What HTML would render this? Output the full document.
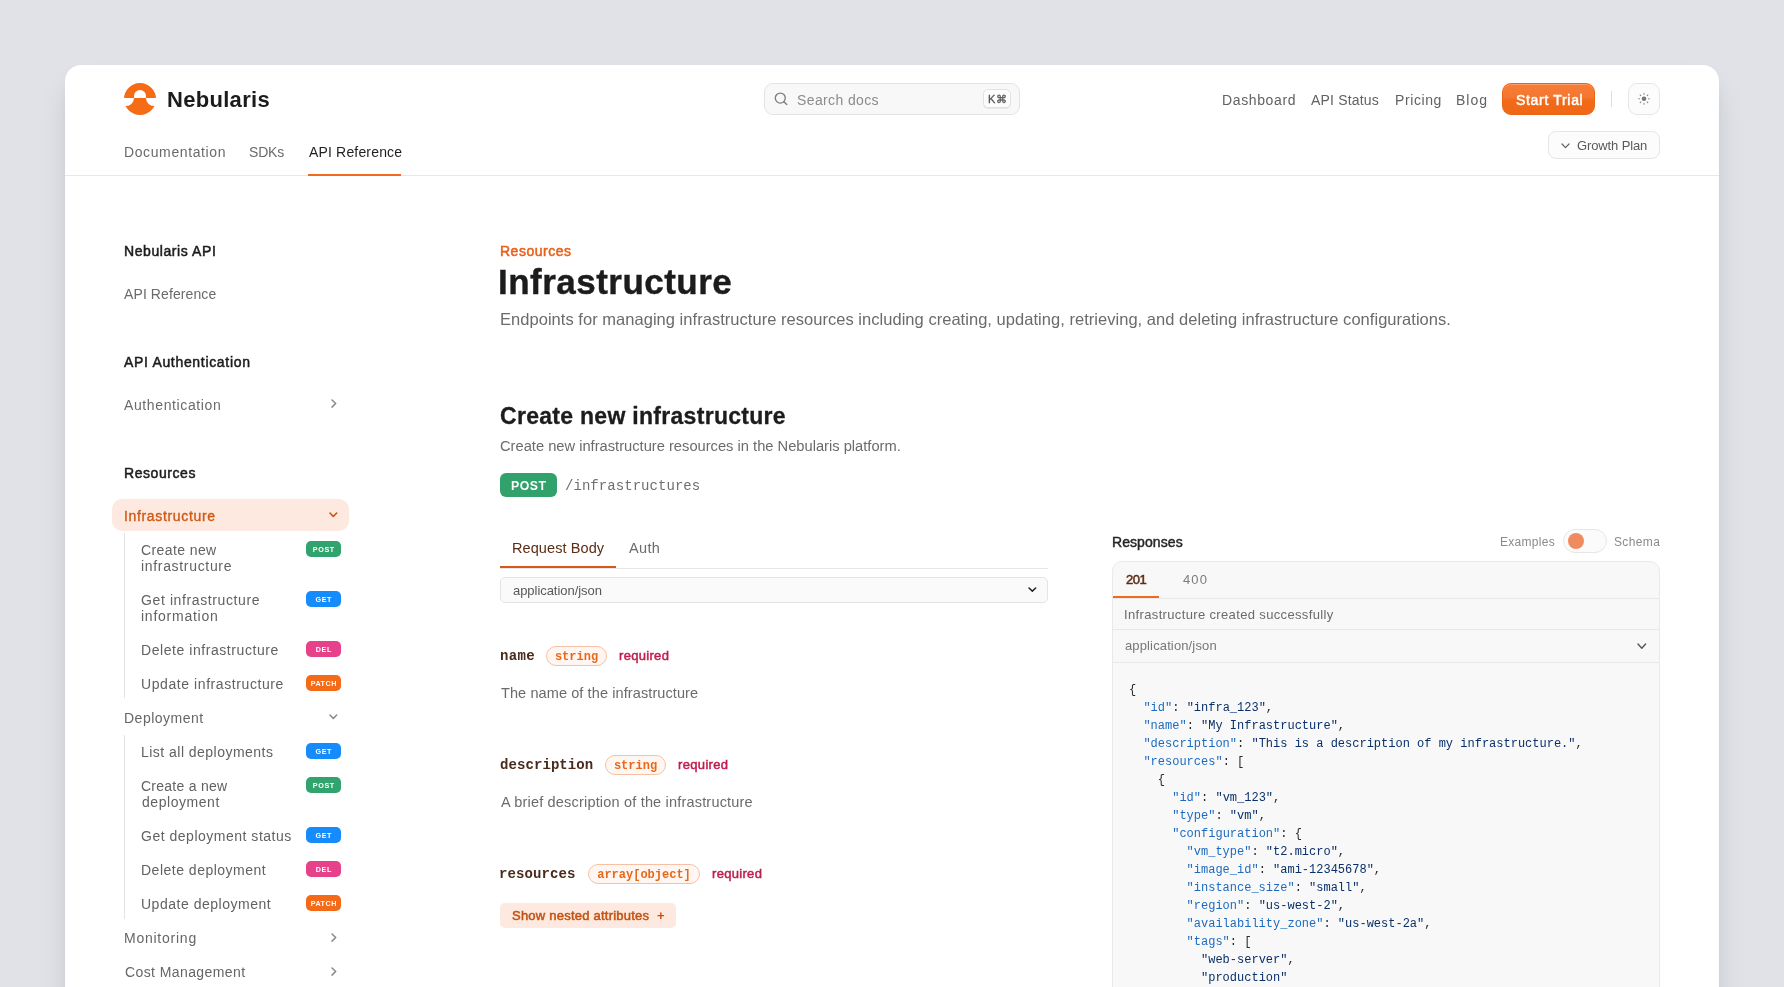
<!DOCTYPE html>
<html><head><meta charset="utf-8"><style>
*{box-sizing:border-box;margin:0;padding:0}
html,body{width:1784px;height:987px;overflow:hidden;background:#e1e2e7;font-family:"Liberation Sans",sans-serif}
.card{position:absolute;left:65px;top:65px;width:1654px;height:1000px;background:#fff;border-radius:16px;box-shadow:0 20px 30px -4px rgba(0,0,0,0.13),0 8px 12px -6px rgba(0,0,0,0.12)}
.a{position:absolute;white-space:nowrap;will-change:transform}
.t{position:absolute;white-space:nowrap;will-change:transform}
.badge{will-change:transform;position:absolute;left:306px;width:35px;height:16px;border-radius:5px;color:#fff;font-size:7.2px;font-weight:bold;line-height:17px;text-align:center}
.post{background:#31a36d}.get{background:#168bfb}.del{background:#e6418a}.patch{background:#f46a17}
.vline{position:absolute;left:124px;width:1px;background:#e4e4e4}
.pill{will-change:transform;height:20px;border:1px solid #f7bfa3;border-radius:10px;background:#fff6f1;color:#e8681a;font-family:"Liberation Mono",monospace;font-size:12px;font-weight:bold;line-height:18px;text-align:center}
.code{font-family:"Liberation Mono",monospace;font-size:12px;line-height:18px;color:#24292f;white-space:pre}
.code k{color:#1d6bc0}
.code v{color:#0a3069}
</style></head><body>

<div class="card"></div>
<svg class="a" style="left:124px;top:83px" width="32" height="32" viewBox="0 0 32 32">
  <circle cx="16" cy="16" r="16" fill="#f56b16"/>
  <path d="M10 15 V13 A6 6 0 0 1 22 13 V15 Z" fill="#fff"/>
  <path d="M-6 15 A8 8 0 0 0 10 15 Z" fill="#fff"/>
  <path d="M22 15 A8 8 0 0 0 38 15 Z" fill="#fff"/>
</svg>
<div class="a" style="left:764px;top:83px;width:256px;height:32px;border:1px solid #e3e3e3;border-radius:9px;background:#f8f8f8"></div>
<svg class="a" style="left:772px;top:90px" width="18" height="18" viewBox="0 0 18 18"><circle cx="8.3" cy="8.1" r="5" fill="none" stroke="#7e7e7e" stroke-width="1.35"/><path d="M11.9 11.7 L14.8 14.6" stroke="#7e7e7e" stroke-width="1.35" stroke-linecap="round"/></svg>
<div class="a" style="left:983px;top:89px;width:28px;height:19px;border:1px solid #e2e2e2;border-radius:5px;background:#fdfdfd;box-shadow:0 1px 0 rgba(0,0,0,0.06)"></div>
<div class="a" style="left:988px;top:90px;line-height:19px;font-size:11px;color:#555;letter-spacing:0.3px;-webkit-text-stroke:0.3px #555">K&#8984;</div>
<div class="a" style="left:1502px;top:83px;width:93px;height:32px;border-radius:9px;border:1px solid #ec6416;background:linear-gradient(#f77e36 0%,#f47630 45%,#f26a18 55%,#f06815 100%);box-shadow:inset 0 1px 0 rgba(255,255,255,0.25)"></div>
<div class="a" style="left:1611px;top:91px;width:1px;height:16px;background:#dddddd"></div>
<div class="a" style="left:1628px;top:83px;width:32px;height:32px;border:1px solid #e6e6e6;border-radius:9px;background:#fcfcfc"></div>
<svg class="a" style="left:1636px;top:91px" width="16" height="16" viewBox="0 0 16 16">
  <circle cx="8" cy="7.8" r="2.3" fill="#767676"/>
  <g stroke="#8a8a8a" stroke-width="1.1" stroke-linecap="round">
    <path d="M8 2.4V3.2M8 12.4V13.2M2.7 7.8H3.5M12.5 7.8H13.3M4.2 4L4.8 4.6M11.2 11L11.8 11.6M4.2 11.6L4.8 11M11.2 4.6L11.8 4"/>
  </g>
</svg>
<div class="a" style="left:65px;top:175px;width:1654px;height:1px;background:#e8e8e8"></div>
<div class="a" style="left:308px;top:174px;width:93px;height:2px;background:#f06a1f"></div>
<div class="a" style="left:1548px;top:131px;width:112px;height:28px;border:1px solid #e6e6e6;border-radius:8px;background:#fcfcfc"></div>
<svg class="a" style="left:1561px;top:142.5px" width="9" height="5.6" viewBox="-1 -1 9 5.6"><path d="M0 0 L3.5 3.6 L7 0" fill="none" stroke="#666" stroke-width="1.3" stroke-linecap="round" stroke-linejoin="round"/></svg>

<div class="a" style="left:112px;top:499px;width:237px;height:32px;border-radius:10px;background:#fde9df"></div>
<svg class="a" style="left:328.6px;top:512.4px" width="8.7" height="5.5" viewBox="-1 -1 8.7 5.5"><path d="M0 0 L3.35 3.5 L6.7 0" fill="none" stroke="#c85410" stroke-width="1.6" stroke-linecap="round" stroke-linejoin="round"/></svg>
<svg class="a" style="left:330.5px;top:399.3px" width="5.7" height="9.1" viewBox="-1 -1 5.7 9.1"><path d="M0 0 L3.7 3.55 L0 7.1" fill="none" stroke="#888" stroke-width="1.5" stroke-linecap="round" stroke-linejoin="round"/></svg>
<div class="vline" style="top:533px;height:165px"></div>
<div class="badge post" style="top:541px"><span style="letter-spacing:0.6px;margin-right:-0.6px">POST</span></div>
<div class="badge get" style="top:591px"><span style="letter-spacing:0.6px;margin-right:-0.6px">GET</span></div>
<div class="badge del" style="top:641px"><span style="letter-spacing:0.6px;margin-right:-0.6px">DEL</span></div>
<div class="badge patch" style="top:675px"><span style="letter-spacing:0.5px;margin-right:-0.5px">PATCH</span></div>
<svg class="a" style="left:328.6px;top:713.5px" width="8.7" height="5.5" viewBox="-1 -1 8.7 5.5"><path d="M0 0 L3.35 3.5 L6.7 0" fill="none" stroke="#888" stroke-width="1.5" stroke-linecap="round" stroke-linejoin="round"/></svg>
<div class="vline" style="top:735px;height:184px"></div>
<div class="badge get" style="top:743px"><span style="letter-spacing:0.6px;margin-right:-0.6px">GET</span></div>
<div class="badge post" style="top:777px"><span style="letter-spacing:0.6px;margin-right:-0.6px">POST</span></div>
<div class="badge get" style="top:827px"><span style="letter-spacing:0.6px;margin-right:-0.6px">GET</span></div>
<div class="badge del" style="top:861px"><span style="letter-spacing:0.6px;margin-right:-0.6px">DEL</span></div>
<div class="badge patch" style="top:895px"><span style="letter-spacing:0.5px;margin-right:-0.5px">PATCH</span></div>
<svg class="a" style="left:330.5px;top:932.5px" width="5.7" height="9.1" viewBox="-1 -1 5.7 9.1"><path d="M0 0 L3.7 3.55 L0 7.1" fill="none" stroke="#888" stroke-width="1.5" stroke-linecap="round" stroke-linejoin="round"/></svg>
<svg class="a" style="left:330.5px;top:966.5px" width="5.7" height="9.1" viewBox="-1 -1 5.7 9.1"><path d="M0 0 L3.7 3.55 L0 7.1" fill="none" stroke="#888" stroke-width="1.5" stroke-linecap="round" stroke-linejoin="round"/></svg>

<div class="a" style="left:500px;top:473px;width:57px;height:24px;border-radius:6px;background:#31a26c"></div>
<div class="a" style="left:500px;top:474px;width:57px;line-height:24px;font-size:12.3px;font-weight:bold;color:#fff;text-align:center;letter-spacing:0.45px;padding-left:0.5px">POST</div>
<div class="a" style="left:500px;top:568px;width:548px;height:1px;background:#e6e6e6"></div>
<div class="a" style="left:500px;top:566px;width:116px;height:2px;background:#d4591a"></div>
<div class="a" style="left:500px;top:577px;width:548px;height:26px;border:1px solid #e4e4e4;border-radius:5px;background:#fafafa"></div>
<svg class="a" style="left:1028px;top:587.4px" width="8.7" height="5.1" viewBox="-1 -1 8.7 5.1"><path d="M0 0 L3.35 3.1 L6.7 0" fill="none" stroke="#222" stroke-width="1.5" stroke-linecap="round" stroke-linejoin="round"/></svg>

<div class="a pill" style="left:546px;top:646px;width:61px;padding-top:1px">string</div>
<div class="a pill" style="left:605px;top:755px;width:61px;padding-top:1px">string</div>
<div class="a pill" style="left:588px;top:864px;width:112px;padding-top:1px">array[object]</div>
<div class="a" style="left:500px;top:903px;width:176px;height:25px;border-radius:5px;background:#fde9df"></div>
<div class="a" style="left:657px;top:906px;line-height:20px;font-size:13px;font-weight:bold;color:#c4520f">+</div>

<div class="a" style="left:1563px;top:529px;width:44px;height:24px;border:1px solid #e6e6e6;border-radius:12px;background:#fbfbfb"></div>
<div class="a" style="left:1568px;top:533px;width:16px;height:16px;border-radius:50%;background:#ef8b5e"></div>
<div class="a" style="left:1112px;top:561px;width:548px;height:500px;border:1px solid #e9e9e9;border-radius:10px;background:#f8f8f8"></div>
<div class="a" style="left:1113px;top:598px;width:546px;height:1px;background:#e8e8e8"></div>
<div class="a" style="left:1113px;top:596px;width:46px;height:2px;background:#f06a1f"></div>
<div class="a" style="left:1113px;top:629px;width:546px;height:1px;background:#e8e8e8"></div>
<svg class="a" style="left:1637.3px;top:642.6px" width="9.6" height="6.2" viewBox="-1 -1 9.6 6.2"><path d="M0 0 L3.8 4.2 L7.6 0" fill="none" stroke="#555" stroke-width="1.4" stroke-linecap="round" stroke-linejoin="round"/></svg>
<div class="a" style="left:1113px;top:662px;width:546px;height:1px;background:#e8e8e8"></div>

<div class="t" id="brand" style="left:166.90px;top:86px;line-height:28px;font-family:'Liberation Sans',sans-serif;font-size:22px;font-weight:bold;color:#1c1c1c;letter-spacing:0.298px;">Nebularis</div>
<div class="t" id="nt1" style="left:123.60px;top:142px;line-height:20px;font-family:'Liberation Sans',sans-serif;font-size:14px;font-weight:normal;color:#6b6b6b;letter-spacing:0.608px;">Documentation</div>
<div class="t" id="nt2" style="left:248.50px;top:142px;line-height:20px;font-family:'Liberation Sans',sans-serif;font-size:14px;font-weight:normal;color:#6b6b6b;letter-spacing:-0.167px;">SDKs</div>
<div class="t" id="nt3" style="left:309.20px;top:142px;line-height:20px;font-family:'Liberation Sans',sans-serif;font-size:14px;font-weight:normal;color:#1f1f1f;letter-spacing:0.166px;">API Reference</div>
<div class="t" id="srch" style="left:796.80px;top:90px;line-height:20px;font-family:'Liberation Sans',sans-serif;font-size:14px;font-weight:normal;color:#8c8c8c;letter-spacing:0.380px;">Search docs</div>
<div class="t" id="rn1" style="left:1222.20px;top:90px;line-height:20px;font-family:'Liberation Sans',sans-serif;font-size:14px;font-weight:normal;color:#626262;letter-spacing:0.626px;">Dashboard</div>
<div class="t" id="rn2" style="left:1310.60px;top:90px;line-height:20px;font-family:'Liberation Sans',sans-serif;font-size:14px;font-weight:normal;color:#626262;letter-spacing:0.177px;">API Status</div>
<div class="t" id="rn3" style="left:1394.90px;top:90px;line-height:20px;font-family:'Liberation Sans',sans-serif;font-size:14px;font-weight:normal;color:#626262;letter-spacing:0.600px;">Pricing</div>
<div class="t" id="rn4" style="left:1456.00px;top:90px;line-height:20px;font-family:'Liberation Sans',sans-serif;font-size:14px;font-weight:normal;color:#626262;letter-spacing:0.967px;">Blog</div>
<div class="t" id="trial" style="left:1515.90px;top:90px;line-height:20px;font-family:'Liberation Sans',sans-serif;font-size:14px;font-weight:normal;color:#ffffff;letter-spacing:0.680px;-webkit-text-stroke:0.5px #ffffff">Start Trial</div>
<div class="t" id="growth" style="left:1577.00px;top:136px;line-height:20px;font-family:'Liberation Sans',sans-serif;font-size:13px;font-weight:normal;color:#5a5a5a;letter-spacing:-0.120px;">Growth Plan</div>
<div class="t" id="sh1" style="left:123.90px;top:241px;line-height:20px;font-family:'Liberation Sans',sans-serif;font-size:14px;font-weight:normal;color:#1c1c1c;letter-spacing:0.584px;-webkit-text-stroke:0.5px #1c1c1c">Nebularis API</div>
<div class="t" id="si1" style="left:124.20px;top:284px;line-height:20px;font-family:'Liberation Sans',sans-serif;font-size:14px;font-weight:normal;color:#6b6b6b;letter-spacing:0.100px;">API Reference</div>
<div class="t" id="sh2" style="left:124.20px;top:352px;line-height:20px;font-family:'Liberation Sans',sans-serif;font-size:14px;font-weight:normal;color:#1c1c1c;letter-spacing:0.677px;-webkit-text-stroke:0.5px #1c1c1c">API Authentication</div>
<div class="t" id="si2" style="left:124.20px;top:395px;line-height:20px;font-family:'Liberation Sans',sans-serif;font-size:14px;font-weight:normal;color:#6b6b6b;letter-spacing:0.615px;">Authentication</div>
<div class="t" id="sh3" style="left:123.90px;top:463px;line-height:20px;font-family:'Liberation Sans',sans-serif;font-size:14px;font-weight:normal;color:#1c1c1c;letter-spacing:0.565px;-webkit-text-stroke:0.5px #1c1c1c">Resources</div>
<div class="t" id="si3" style="left:123.90px;top:506px;line-height:20px;font-family:'Liberation Sans',sans-serif;font-size:14px;font-weight:normal;color:#cf5816;letter-spacing:0.661px;-webkit-text-stroke:0.35px #cf5816">Infrastructure</div>
<div class="t" id="s1a" style="left:140.80px;top:542px;line-height:16px;font-family:'Liberation Sans',sans-serif;font-size:14px;font-weight:normal;color:#626262;letter-spacing:0.399px;">Create new</div>
<div class="t" id="s1b" style="left:140.80px;top:558px;line-height:16px;font-family:'Liberation Sans',sans-serif;font-size:14px;font-weight:normal;color:#626262;letter-spacing:0.677px;">infrastructure</div>
<div class="t" id="s2a" style="left:140.80px;top:592px;line-height:16px;font-family:'Liberation Sans',sans-serif;font-size:14px;font-weight:normal;color:#626262;letter-spacing:0.606px;">Get infrastructure</div>
<div class="t" id="s2b" style="left:140.80px;top:608px;line-height:16px;font-family:'Liberation Sans',sans-serif;font-size:14px;font-weight:normal;color:#626262;letter-spacing:0.750px;">information</div>
<div class="t" id="s3" style="left:140.50px;top:642px;line-height:16px;font-family:'Liberation Sans',sans-serif;font-size:14px;font-weight:normal;color:#626262;letter-spacing:0.560px;">Delete infrastructure</div>
<div class="t" id="s4" style="left:140.50px;top:676px;line-height:16px;font-family:'Liberation Sans',sans-serif;font-size:14px;font-weight:normal;color:#626262;letter-spacing:0.580px;">Update infrastructure</div>
<div class="t" id="si4" style="left:123.50px;top:708px;line-height:20px;font-family:'Liberation Sans',sans-serif;font-size:14px;font-weight:normal;color:#666666;letter-spacing:0.500px;">Deployment</div>
<div class="t" id="s5" style="left:140.50px;top:744px;line-height:16px;font-family:'Liberation Sans',sans-serif;font-size:14px;font-weight:normal;color:#626262;letter-spacing:0.474px;">List all deployments</div>
<div class="t" id="s6a" style="left:140.80px;top:778px;line-height:16px;font-family:'Liberation Sans',sans-serif;font-size:14px;font-weight:normal;color:#626262;letter-spacing:0.255px;">Create a new</div>
<div class="t" id="s6b" style="left:141.80px;top:794px;line-height:16px;font-family:'Liberation Sans',sans-serif;font-size:14px;font-weight:normal;color:#626262;letter-spacing:0.544px;">deployment</div>
<div class="t" id="s7" style="left:140.80px;top:828px;line-height:16px;font-family:'Liberation Sans',sans-serif;font-size:14px;font-weight:normal;color:#626262;letter-spacing:0.510px;">Get deployment status</div>
<div class="t" id="s8" style="left:140.80px;top:862px;line-height:16px;font-family:'Liberation Sans',sans-serif;font-size:14px;font-weight:normal;color:#626262;letter-spacing:0.499px;">Delete deployment</div>
<div class="t" id="s9" style="left:140.80px;top:896px;line-height:16px;font-family:'Liberation Sans',sans-serif;font-size:14px;font-weight:normal;color:#626262;letter-spacing:0.513px;">Update deployment</div>
<div class="t" id="si5" style="left:123.50px;top:928px;line-height:20px;font-family:'Liberation Sans',sans-serif;font-size:14px;font-weight:normal;color:#666666;letter-spacing:0.756px;">Monitoring</div>
<div class="t" id="si6" style="left:124.50px;top:962px;line-height:20px;font-family:'Liberation Sans',sans-serif;font-size:14px;font-weight:normal;color:#666666;letter-spacing:0.407px;">Cost Management</div>
<div class="t" id="m1" style="left:500.20px;top:241px;line-height:20px;font-family:'Liberation Sans',sans-serif;font-size:14px;font-weight:normal;color:#e8601a;letter-spacing:0.500px;-webkit-text-stroke:0.5px #e8601a">Resources</div>
<div class="t" id="m2" style="left:498.20px;top:262px;line-height:40px;font-family:'Liberation Sans',sans-serif;font-size:35px;font-weight:bold;color:#1c1c1c;letter-spacing:0.478px;-webkit-text-stroke:0.4px #1c1c1c">Infrastructure</div>
<div class="t" id="m3" style="left:499.50px;top:308px;line-height:22px;font-family:'Liberation Sans',sans-serif;font-size:16.5px;font-weight:normal;color:#6b6b6b;letter-spacing:0.033px;">Endpoints for managing infrastructure resources including creating, updating, retrieving, and deleting infrastructure configurations.</div>
<div class="t" id="m4" style="left:499.60px;top:401px;line-height:30px;font-family:'Liberation Sans',sans-serif;font-size:23px;font-weight:bold;color:#1c1c1c;letter-spacing:0.291px;-webkit-text-stroke:0.3px #1c1c1c">Create new infrastructure</div>
<div class="t" id="m5" style="left:500.00px;top:435px;line-height:22px;font-family:'Liberation Sans',sans-serif;font-size:14.7px;font-weight:normal;color:#6b6b6b;letter-spacing:0.000px;">Create new infrastructure resources in the Nebularis platform.</div>
<div class="t" id="path" style="left:564.60px;top:476px;line-height:20px;font-family:'Liberation Mono',monospace;font-size:14px;font-weight:normal;color:#6f6f6f;letter-spacing:0.053px;">/infrastructures</div>
<div class="t" id="rb" style="left:511.50px;top:538px;line-height:20px;font-family:'Liberation Sans',sans-serif;font-size:14.5px;font-weight:normal;color:#5c2c14;letter-spacing:0.091px;">Request Body</div>
<div class="t" id="auth" style="left:628.60px;top:538px;line-height:20px;font-family:'Liberation Sans',sans-serif;font-size:14.5px;font-weight:normal;color:#6b6b6b;letter-spacing:0.333px;">Auth</div>
<div class="t" id="aj1" style="left:512.60px;top:581px;line-height:20px;font-family:'Liberation Sans',sans-serif;font-size:13px;font-weight:normal;color:#595959;letter-spacing:-0.047px;">application/json</div>
<div class="t" id="f1" style="left:500.20px;top:646px;line-height:20px;font-family:'Liberation Mono',monospace;font-size:14px;font-weight:bold;color:#4a2a1a;letter-spacing:0.333px;">name</div>
<div class="t" id="r1" style="left:618.60px;top:646px;line-height:20px;font-family:'Liberation Sans',sans-serif;font-size:13px;font-weight:normal;color:#c01d4e;letter-spacing:0.314px;-webkit-text-stroke:0.5px #c01d4e">required</div>
<div class="t" id="d1" style="left:500.70px;top:683px;line-height:20px;font-family:'Liberation Sans',sans-serif;font-size:14.5px;font-weight:normal;color:#6b6b6b;letter-spacing:0.099px;">The name of the infrastructure</div>
<div class="t" id="f2" style="left:500.00px;top:755px;line-height:20px;font-family:'Liberation Mono',monospace;font-size:14px;font-weight:bold;color:#4a2a1a;letter-spacing:0.080px;">description</div>
<div class="t" id="r2" style="left:678.00px;top:755px;line-height:20px;font-family:'Liberation Sans',sans-serif;font-size:13px;font-weight:normal;color:#c01d4e;letter-spacing:0.343px;-webkit-text-stroke:0.5px #c01d4e">required</div>
<div class="t" id="d2" style="left:501.10px;top:792px;line-height:20px;font-family:'Liberation Sans',sans-serif;font-size:14.5px;font-weight:normal;color:#6b6b6b;letter-spacing:0.185px;">A brief description of the infrastructure</div>
<div class="t" id="f3" style="left:499.00px;top:864px;line-height:20px;font-family:'Liberation Mono',monospace;font-size:14px;font-weight:bold;color:#4a2a1a;letter-spacing:0.086px;">resources</div>
<div class="t" id="r3" style="left:711.70px;top:864px;line-height:20px;font-family:'Liberation Sans',sans-serif;font-size:13px;font-weight:normal;color:#c01d4e;letter-spacing:0.314px;-webkit-text-stroke:0.5px #c01d4e">required</div>
<div class="t" id="nest" style="left:512.00px;top:906px;line-height:20px;font-family:'Liberation Sans',sans-serif;font-size:13px;font-weight:normal;color:#c4520f;letter-spacing:0.230px;-webkit-text-stroke:0.5px #c4520f">Show nested attributes</div>
<div class="t" id="resp" style="left:1111.93px;top:532px;line-height:20px;font-family:'Liberation Sans',sans-serif;font-size:14px;font-weight:normal;color:#262626;letter-spacing:0.073px;-webkit-text-stroke:0.45px #262626">Responses</div>
<div class="t" id="ex" style="left:1500.00px;top:532px;line-height:20px;font-family:'Liberation Sans',sans-serif;font-size:12px;font-weight:normal;color:#8a8a8a;letter-spacing:0.286px;">Examples</div>
<div class="t" id="sch" style="left:1614.30px;top:532px;line-height:20px;font-family:'Liberation Sans',sans-serif;font-size:12px;font-weight:normal;color:#8a8a8a;letter-spacing:0.360px;">Schema</div>
<div class="t" id="c201" style="left:1125.80px;top:570px;line-height:20px;font-family:'Liberation Sans',sans-serif;font-size:13px;font-weight:normal;color:#5c2c14;letter-spacing:-0.450px;-webkit-text-stroke:0.5px #5c2c14">201</div>
<div class="t" id="c400" style="left:1183.10px;top:570px;line-height:20px;font-family:'Liberation Sans',sans-serif;font-size:13px;font-weight:normal;color:#7a7a7a;letter-spacing:1.100px;">400</div>
<div class="t" id="ics" style="left:1124.00px;top:605px;line-height:20px;font-family:'Liberation Sans',sans-serif;font-size:13px;font-weight:normal;color:#6b6b6b;letter-spacing:0.353px;">Infrastructure created successfully</div>
<div class="t" id="aj2" style="left:1125.00px;top:636px;line-height:20px;font-family:'Liberation Sans',sans-serif;font-size:13px;font-weight:normal;color:#777777;letter-spacing:0.133px;">application/json</div>
<pre class="a code" style="left:1129px;top:681px">{
  <k>"id"</k>: <v>"infra_123"</v>,
  <k>"name"</k>: <v>"My Infrastructure"</v>,
  <k>"description"</k>: <v>"This is a description of my infrastructure."</v>,
  <k>"resources"</k>: [
    {
      <k>"id"</k>: <v>"vm_123"</v>,
      <k>"type"</k>: <v>"vm"</v>,
      <k>"configuration"</k>: {
        <k>"vm_type"</k>: <v>"t2.micro"</v>,
        <k>"image_id"</k>: <v>"ami-12345678"</v>,
        <k>"instance_size"</k>: <v>"small"</v>,
        <k>"region"</k>: <v>"us-west-2"</v>,
        <k>"availability_zone"</k>: <v>"us-west-2a"</v>,
        <k>"tags"</k>: [
          <v>"web-server"</v>,
          <v>"production"</v>
        ]
      }
    }
  ]
}</pre>
</body></html>
